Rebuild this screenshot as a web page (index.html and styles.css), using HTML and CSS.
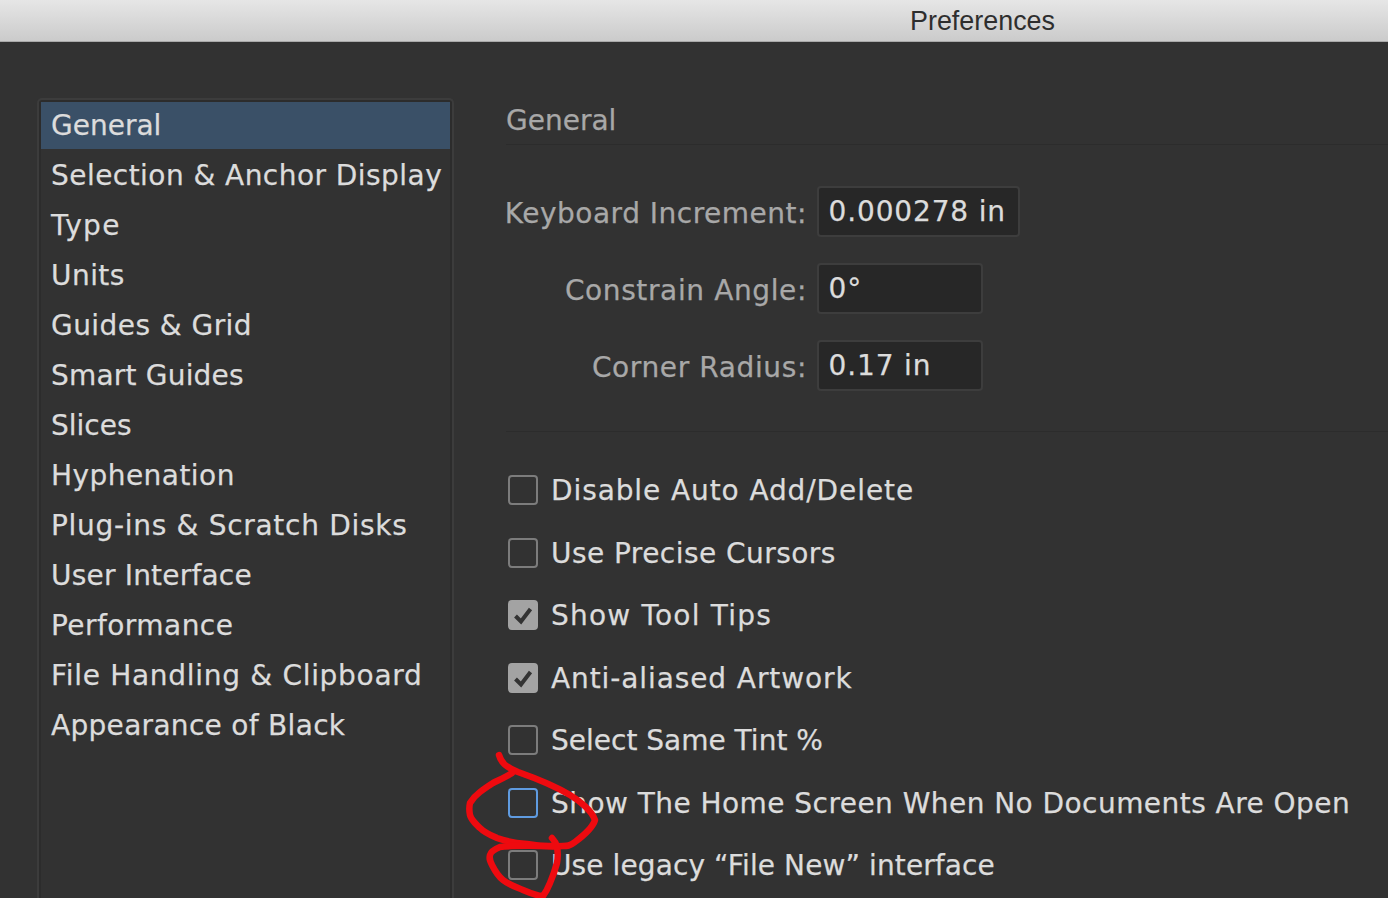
FILE: index.html
```html
<!DOCTYPE html>
<html lang="en">
<head>
<meta charset="utf-8">
<title>Preferences</title>
<link rel="stylesheet" href="styles.css">
</head>
<body>
<header class="titlebar">Preferences</header>
<main class="window">
  <nav class="sidebar">
    <div class="nav-item selected t0">General</div>
    <div class="nav-item t4">Selection &amp; Anchor Display</div>
    <div class="nav-item t14">Type</div>
    <div class="nav-item t4">Units</div>
    <div class="nav-item t4">Guides &amp; Grid</div>
    <div class="nav-item t2">Smart Guides</div>
    <div class="nav-item t0">Slices</div>
    <div class="nav-item t4">Hyphenation</div>
    <div class="nav-item t7">Plug-ins &amp; Scratch Disks</div>
    <div class="nav-item t2">User Interface</div>
    <div class="nav-item t4">Performance</div>
    <div class="nav-item t7">File Handling &amp; Clipboard</div>
    <div class="nav-item t3">Appearance of Black</div>
  </nav>
  <section class="panel">
    <h1 class="panel-title">General</h1>
    <div class="fields">
      <label class="field-label t5">Keyboard Increment:</label>
      <div class="input input-wide">0.000278 in</div>
      <label class="field-label t6">Constrain Angle:</label>
      <div class="input">0°</div>
      <label class="field-label t6">Corner Radius:</label>
      <div class="input">0.17 in</div>
    </div>
    <div class="checks">
      <div class="check-row t9"><span class="box"></span>Disable Auto Add/Delete</div>
      <div class="check-row t4"><span class="box"></span>Use Precise Cursors</div>
      <div class="check-row t12"><span class="box checked"><svg viewBox="0 0 30 30" class="tick"><path d="M7.500 16l5.500 5.500L22.500 9"/></svg></span>Show Tool Tips</div>
      <div class="check-row t9"><span class="box checked"><svg viewBox="0 0 30 30" class="tick"><path d="M7.500 16l5.500 5.500L22.500 9"/></svg></span>Anti-aliased Artwork</div>
      <div class="check-row t0"><span class="box"></span>Select Same Tint %</div>
      <div class="check-row t4"><span class="box focused"></span>Show The Home Screen When No Documents Are Open</div>
      <div class="check-row t1"><span class="box"></span>Use legacy “File New” interface</div>
    </div>
  </section>
</main>
<svg class="scribble" viewBox="0 0 1388 898" aria-hidden="true">
  <path d="M499 755C501 762 505 767 518 772C535 778 555 786 570 795C580 801 592 811 595 820C593 827 583 836 575 842C570 846 567 846 563 846C550 847 538 846 527 844C515 843 505 841 497 838C490 835 485 833 480 828C475 823 471 820 470 815C469 810 469 807 470 803C473 798 476 795 480 792C484 789 488 786 493 783C499 780 506 777 512 773"/>
  <path d="M553 846C535 846 515 845 500 847C495 849 491 851 490 855C489 859 490 861 492 865C495 871 498 876 503 880C509 885 516 887 523 890C530 893 537 896 543 896C546 892 548 888 550 883C553 876 555 870 557 863C558 857 558 852 557 847C556 843 554 840 552 838"/>
</svg>
</body>
</html>
```
FILE: styles.css
```css
* { box-sizing: border-box; }
html, body { margin: 0; height: 898px; overflow: hidden; }
body {
  position: relative;
  background: #323232;
  color: #dcdcdc;
  font-family: "DejaVu Sans", sans-serif;
  -webkit-text-stroke: 0.25px currentColor;
}
.t0 { letter-spacing: 0; }
.t1 { letter-spacing: 0.1px; }
.t2 { letter-spacing: 0.2px; }
.t3 { letter-spacing: 0.3px; }
.t4 { letter-spacing: 0.45px; }
.t5 { letter-spacing: 0.5px; }
.t6 { letter-spacing: 0.62px; }
.t7 { letter-spacing: 0.7px; }
.t9 { letter-spacing: 0.9px; }
.t12 { letter-spacing: 1.2px; }
.t14 { letter-spacing: 1.4px; }
.titlebar {
  height: 42px;
  padding: 7px 0 0 910px;
  background: linear-gradient(#e6e6e6, #cbcbcb);
  border-bottom: 1px solid #a9a9a9;
  color: #2e2e2e;
  font-family: "Liberation Sans", sans-serif;
  font-size: 26.900px;
  line-height: 28px;
  -webkit-text-stroke: 0;
}
.window { display: flex; align-items: flex-start; padding: 56px 0 0 37px; }
.sidebar {
  flex: none;
  width: 417px;
  height: 829px;
  padding: 2px 2px 0;
  border: 2px solid #3c3c3c;
  border-bottom: 0;
  border-radius: 5px 5px 0 0;
  box-shadow: inset 0 0 0 2px #2c2c2c;
}
.nav-item {
  height: 50px;
  padding-left: 10px;
  font-size: 28px;
  line-height: 48px;
  white-space: nowrap;
}
.nav-item.selected { height: 47px; margin-bottom: 3px; background: #3a5067; line-height: 48px; }
.panel { flex: 1; min-width: 0; padding: 0 0 0 52px; }
.panel-title {
  margin: 0;
  height: 47px;
  padding-top: 1px;
  border-bottom: 1px solid #2c2c2c;
  color: #a8a8a8;
  font-size: 28px;
  font-weight: 400;
  line-height: 44px;
}
.fields {
  display: grid;
  grid-template-columns: 301px max-content;
  column-gap: 10px;
  row-gap: 26px;
  align-items: center;
  align-content: start;
  justify-items: start;
  height: 287px;
  padding-top: 41px;
  border-bottom: 1px solid #2c2c2c;
}
.field-label {
  justify-self: end;
  padding-top: 4px;
  color: #a8a8a8;
  font-size: 28px;
  line-height: 47px;
  white-space: nowrap;
}
.input {
  width: 166px;
  height: 51px;
  padding-left: 9.600px;
  border: 2px solid #3d3d3d;
  border-radius: 4px;
  background: #272727;
  color: #dcdcdc;
  font-size: 28px;
  letter-spacing: 0.85px;
  line-height: 48px;
  white-space: nowrap;
}
.input-wide { width: 203px; }
.checks { padding-top: 27.300px; }
.check-row {
  display: flex;
  align-items: center;
  gap: 13px;
  height: 62.500px;
  padding-left: 2px;
  font-size: 28px;
  white-space: nowrap;
}
.box {
  flex: none;
  width: 30px;
  height: 30px;
  margin-top: -1px;
  border: 2px solid #7c7c7c;
  border-radius: 4px;
}
.box.checked { background: #a3a3a3; border-color: #a3a3a3; }
.box.focused { border-color: #5f9be0; }
.tick { display: block; width: 30px; height: 30px; margin: -2px; fill: none; stroke: #333; stroke-width: 4; }
.scribble {
  position: absolute;
  left: 0;
  top: 0;
  width: 1388px;
  height: 898px;
  fill: none;
  stroke: #ee0a0f;
  stroke-width: 6.500;
  stroke-linecap: round;
  stroke-linejoin: round;
  pointer-events: none;
}
```
